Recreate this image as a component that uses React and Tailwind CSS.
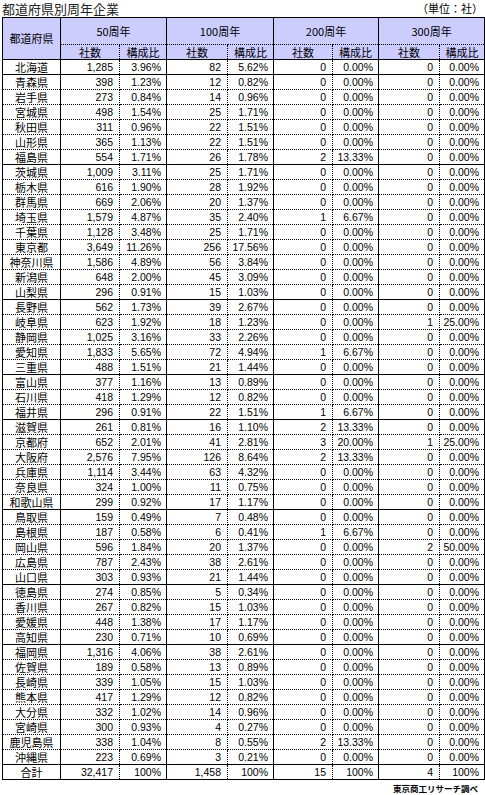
import React from "react";

const rows = [
  ["北海道", "1,285", "3.96%", "82", "5.62%", "0", "0.00%", "0", "0.00%"],
  ["青森県", "398", "1.23%", "12", "0.82%", "0", "0.00%", "0", "0.00%"],
  ["岩手県", "273", "0.84%", "14", "0.96%", "0", "0.00%", "0", "0.00%"],
  ["宮城県", "498", "1.54%", "25", "1.71%", "0", "0.00%", "0", "0.00%"],
  ["秋田県", "311", "0.96%", "22", "1.51%", "0", "0.00%", "0", "0.00%"],
  ["山形県", "365", "1.13%", "22", "1.51%", "0", "0.00%", "0", "0.00%"],
  ["福島県", "554", "1.71%", "26", "1.78%", "2", "13.33%", "0", "0.00%"],
  ["茨城県", "1,009", "3.11%", "25", "1.71%", "0", "0.00%", "0", "0.00%"],
  ["栃木県", "616", "1.90%", "28", "1.92%", "0", "0.00%", "0", "0.00%"],
  ["群馬県", "669", "2.06%", "20", "1.37%", "0", "0.00%", "0", "0.00%"],
  ["埼玉県", "1,579", "4.87%", "35", "2.40%", "1", "6.67%", "0", "0.00%"],
  ["千葉県", "1,128", "3.48%", "25", "1.71%", "0", "0.00%", "0", "0.00%"],
  ["東京都", "3,649", "11.26%", "256", "17.56%", "0", "0.00%", "0", "0.00%"],
  ["神奈川県", "1,586", "4.89%", "56", "3.84%", "0", "0.00%", "0", "0.00%"],
  ["新潟県", "648", "2.00%", "45", "3.09%", "0", "0.00%", "0", "0.00%"],
  ["山梨県", "296", "0.91%", "15", "1.03%", "0", "0.00%", "0", "0.00%"],
  ["長野県", "562", "1.73%", "39", "2.67%", "0", "0.00%", "0", "0.00%"],
  ["岐阜県", "623", "1.92%", "18", "1.23%", "0", "0.00%", "1", "25.00%"],
  ["静岡県", "1,025", "3.16%", "33", "2.26%", "0", "0.00%", "0", "0.00%"],
  ["愛知県", "1,833", "5.65%", "72", "4.94%", "1", "6.67%", "0", "0.00%"],
  ["三重県", "488", "1.51%", "21", "1.44%", "0", "0.00%", "0", "0.00%"],
  ["富山県", "377", "1.16%", "13", "0.89%", "0", "0.00%", "0", "0.00%"],
  ["石川県", "418", "1.29%", "12", "0.82%", "0", "0.00%", "0", "0.00%"],
  ["福井県", "296", "0.91%", "22", "1.51%", "1", "6.67%", "0", "0.00%"],
  ["滋賀県", "261", "0.81%", "16", "1.10%", "2", "13.33%", "0", "0.00%"],
  ["京都府", "652", "2.01%", "41", "2.81%", "3", "20.00%", "1", "25.00%"],
  ["大阪府", "2,576", "7.95%", "126", "8.64%", "2", "13.33%", "0", "0.00%"],
  ["兵庫県", "1,114", "3.44%", "63", "4.32%", "0", "0.00%", "0", "0.00%"],
  ["奈良県", "324", "1.00%", "11", "0.75%", "0", "0.00%", "0", "0.00%"],
  ["和歌山県", "299", "0.92%", "17", "1.17%", "0", "0.00%", "0", "0.00%"],
  ["鳥取県", "159", "0.49%", "7", "0.48%", "0", "0.00%", "0", "0.00%"],
  ["島根県", "187", "0.58%", "6", "0.41%", "1", "6.67%", "0", "0.00%"],
  ["岡山県", "596", "1.84%", "20", "1.37%", "0", "0.00%", "2", "50.00%"],
  ["広島県", "787", "2.43%", "38", "2.61%", "0", "0.00%", "0", "0.00%"],
  ["山口県", "303", "0.93%", "21", "1.44%", "0", "0.00%", "0", "0.00%"],
  ["徳島県", "274", "0.85%", "5", "0.34%", "0", "0.00%", "0", "0.00%"],
  ["香川県", "267", "0.82%", "15", "1.03%", "0", "0.00%", "0", "0.00%"],
  ["愛媛県", "448", "1.38%", "17", "1.17%", "0", "0.00%", "0", "0.00%"],
  ["高知県", "230", "0.71%", "10", "0.69%", "0", "0.00%", "0", "0.00%"],
  ["福岡県", "1,316", "4.06%", "38", "2.61%", "0", "0.00%", "0", "0.00%"],
  ["佐賀県", "189", "0.58%", "13", "0.89%", "0", "0.00%", "0", "0.00%"],
  ["長崎県", "339", "1.05%", "15", "1.03%", "0", "0.00%", "0", "0.00%"],
  ["熊本県", "417", "1.29%", "12", "0.82%", "0", "0.00%", "0", "0.00%"],
  ["大分県", "332", "1.02%", "14", "0.96%", "0", "0.00%", "0", "0.00%"],
  ["宮崎県", "300", "0.93%", "4", "0.27%", "0", "0.00%", "0", "0.00%"],
  ["鹿児島県", "338", "1.04%", "8", "0.55%", "2", "13.33%", "0", "0.00%"],
  ["沖縄県", "223", "0.69%", "3", "0.21%", "0", "0.00%", "0", "0.00%"],
  ["合計", "32,417", "100%", "1,458", "100%", "15", "100%", "4", "100%"],
];

const groupEnd = new Set([
  "北海道",
  "福島県",
  "山梨県",
  "三重県",
  "福井県",
  "和歌山県",
  "山口県",
  "高知県",
  "沖縄県",
  "合計",
]);

const colWidths = [58, 59, 47, 61, 46, 59, 46, 61, 45];
const groups = ["50周年", "100周年", "200周年", "300周年"];

export default function App() {
  return (
    <div className="w-[485px] h-[795px] bg-white text-black overflow-hidden">
      <div className="flex justify-between items-end h-[17px] pl-[2px] pr-[2px]">
        <div className="font-['Noto_Sans_CJK_JP',sans-serif] text-[13px] leading-[16px] text-[#222]">
          都道府県別周年企業
        </div>
        <div className="font-['Noto_Sans_CJK_JP',sans-serif] text-[11px] leading-[14px] mb-[2px]">
          （単位：社）
        </div>
      </div>
      <table className="ml-[2px] w-[482px] table-fixed border-collapse border-t border-l border-black">
        <colgroup>
          {colWidths.map((w, i) => (
            <col key={i} style={{ width: w }} />
          ))}
        </colgroup>
        <thead>
          <tr className="bg-[#ccccff]">
            <th
              rowSpan={2}
              className="p-0 border-r border-b border-black font-normal font-['Noto_Sans_CJK_JP',sans-serif] text-[11px] leading-none text-center"
            >
              都道府県
            </th>
            {groups.map((g) => (
              <th
                key={g}
                colSpan={2}
                className="h-[27px] p-0 border-r border-b border-black [border-bottom-style:dotted]! font-normal font-['Noto_Sans_CJK_JP',sans-serif] text-[11px] leading-none text-center"
              >
                {g}
              </th>
            ))}
          </tr>
          <tr className="bg-[#ccccff]">
            {groups.map((g) => (
              <React.Fragment key={g}>
                <th className="h-[15px] p-0 border-r border-b border-black [border-right-style:dotted]! font-normal font-['Noto_Sans_CJK_JP',sans-serif] text-[11px] leading-none text-center">
                  社数
                </th>
                <th className="h-[15px] p-0 border-r border-b border-black font-normal font-['Noto_Sans_CJK_JP',sans-serif] text-[11px] leading-none text-center">
                  構成比
                </th>
              </React.Fragment>
            ))}
          </tr>
        </thead>
        <tbody>
          {rows.map((r) => {
            const solid = groupEnd.has(r[0]);
            return (
              <tr key={r[0]}>
                <td
                  className={
                    solid
                      ? "h-[15px] p-0 border-r border-b border-black text-center font-['Noto_Sans_CJK_JP',sans-serif] text-[11px] leading-none"
                      : "h-[15px] p-0 border-r border-b border-black [border-bottom-style:dotted]! text-center font-['Noto_Sans_CJK_JP',sans-serif] text-[11px] leading-none"
                  }
                >
                  {r[0]}
                </td>
                {r.slice(1).map((v, i) => {
                  const isCount = i % 2 === 0;
                  let cls;
                  if (isCount && solid) {
                    cls =
                      "h-[15px] p-0 pr-[6px] border-r border-b border-black [border-right-style:dotted]! text-right font-['Liberation_Sans',sans-serif] text-[10.5px] leading-none";
                  } else if (isCount) {
                    cls =
                      "h-[15px] p-0 pr-[6px] border-r border-b border-black [border-right-style:dotted]! [border-bottom-style:dotted]! text-right font-['Liberation_Sans',sans-serif] text-[10.5px] leading-none";
                  } else if (solid) {
                    cls =
                      "h-[15px] p-0 pr-[5px] border-r border-b border-black text-right font-['Liberation_Sans',sans-serif] text-[10.5px] leading-none";
                  } else {
                    cls =
                      "h-[15px] p-0 pr-[5px] border-r border-b border-black [border-bottom-style:dotted]! text-right font-['Liberation_Sans',sans-serif] text-[10.5px] leading-none";
                  }
                  return (
                    <td key={i} className={cls}>
                      {v}
                    </td>
                  );
                })}
              </tr>
            );
          })}
        </tbody>
      </table>
      <div className="flex justify-end pr-[7px] mt-[3px]">
        <div className="font-['Noto_Sans_CJK_JP',sans-serif] text-[8.5px] leading-[10px] font-bold">
          東京商工リサーチ調べ
        </div>
      </div>
    </div>
  );
}
